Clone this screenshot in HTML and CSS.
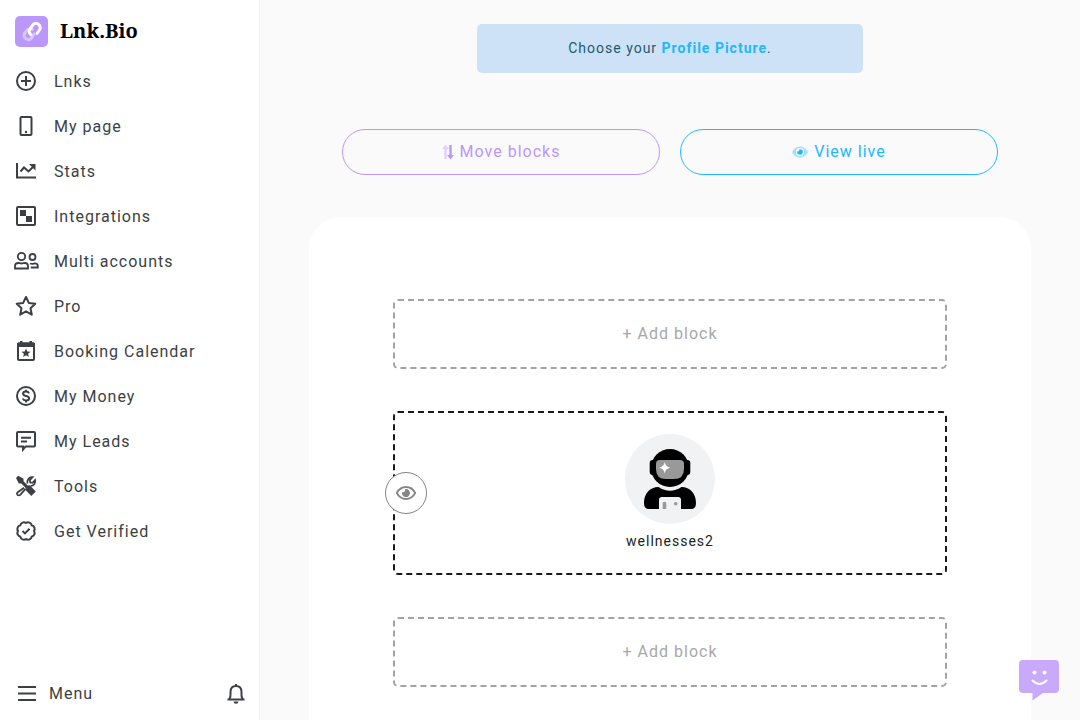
FILE: index.html
```html
<!DOCTYPE html>
<html lang="en">
<head>
  <meta charset="UTF-8">
  <meta name="viewport" content="width=device-width, initial-scale=1.0">
  <title>Lnk.Bio</title>
  <link rel="stylesheet" href="styles.css">
</head>
<body>

  <aside class="sidebar">
    <a class="brand" href="#">
      <span class="brand-mark">
        <svg width="24" height="24" viewBox="0 0 24 24" fill="none" stroke="#fff" stroke-width="3" stroke-linecap="round">
          <path opacity=".45" d="M14 14l-2.500 4a4.200 4.200 0 0 1-7-4.500l2.300-3.200a4.200 4.200 0 0 1 5.700-.8"/>
          <path d="M10.800 14.700a4.200 4.200 0 0 1-.8-5.700l2.500-3.700a4.200 4.200 0 0 1 7 4.700l-2.500 3.500"/>
        </svg>
      </span>
      <span class="brand-name">Lnk.Bio</span>
    </a>

    <nav class="nav">
      <a class="nav-link" href="#">
        <svg class="icon" viewBox="0 0 26 26"><circle cx="13" cy="13" r="9"/><path d="M13 8v10M8 13h10"/></svg>
        Lnks
      </a>
      <a class="nav-link" href="#">
        <svg class="icon" viewBox="0 0 26 26"><rect x="7.500" y="4" width="11" height="18" rx="1"/><circle class="solid" cx="13" cy="19" r="1.200"/></svg>
        My page
      </a>
      <a class="nav-link" href="#">
        <svg class="icon" viewBox="0 0 26 26"><path d="M4 5v14.500h19"/><path d="M7.500 13.500l3.500-4 4.500 4 5-5"/><path class="solid" d="M16 6h6.500v6.500z"/></svg>
        Stats
      </a>
      <a class="nav-link" href="#">
        <svg class="icon" viewBox="0 0 26 26"><rect x="4" y="4" width="18" height="18" rx="1"/><path class="solid" d="M7 7h6v6h6v6h-6v-6H7z"/></svg>
        Integrations
      </a>
      <a class="nav-link" href="#">
        <svg class="icon icon-thin" viewBox="0 0 26 26"><circle cx="8.500" cy="8.500" r="3.700"/><path d="M2 20.500v-2.500c0-2 1.500-3 3.300-3 1.200 0 1.700.5 3.200.5s2-.5 3.200-.5c1.800 0 3.300 1 3.300 3v2.500z"/><circle cx="19.500" cy="9" r="3"/><path d="M17 15.500c1 .3 1.500.3 2.500.3s1.300-.5 2.500-.5c1.600 0 2.800 1.200 2.800 2.700v1.500h-7"/></svg>
        Multi accounts
      </a>
      <a class="nav-link" href="#">
        <svg class="icon" viewBox="0 0 26 26"><path stroke-linejoin="round" d="M13 4l2.800 5.900 6.500.8-4.800 4.500 1.300 6.500-5.800-3.300-5.800 3.300 1.300-6.500-4.800-4.500 6.500-.8z"/></svg>
        Pro
      </a>
      <a class="nav-link" href="#">
        <svg class="icon" viewBox="0 0 26 26"><rect x="5" y="5.500" width="16" height="16.500" rx="1"/><path class="solid" d="M4 5.500l1-1h2V3h2.500v1.500h7V3H19v1.500h2l1 1V9H4z"/><path class="solid" d="M13 10.500l1.300 2.900 3.200.3-2.400 2.100.7 3.200-2.800-1.700-2.800 1.700.7-3.200-2.400-2.100 3.200-.3z"/></svg>
        Booking Calendar
      </a>
      <a class="nav-link" href="#">
        <svg class="icon" viewBox="0 0 26 26"><circle cx="13" cy="13" r="9"/><path d="M16 10.300c-.5-1.200-1.500-1.700-3-1.700-1.800 0-2.900.8-2.900 2.100 0 3 6 1.500 6 4.500 0 1.400-1.200 2.200-3.100 2.200-1.600 0-2.700-.6-3.200-1.900M13 6.700v2M13 17.400v2"/></svg>
        My Money
      </a>
      <a class="nav-link" href="#">
        <svg class="icon" viewBox="0 0 26 26"><path d="M5 4h16a1 1 0 0 1 1 1v12.500a1 1 0 0 1-1 1h-8.500L10 21.500v-3H5a1 1 0 0 1-1-1V5a1 1 0 0 1 1-1z"/><path d="M8 9.700h10M8 13.500h6"/></svg>
        My Leads
      </a>
      <a class="nav-link" href="#">
        <svg class="icon icon-thin" viewBox="0 0 26 26">
          <path d="M11 14.800l-6.500 4.600a1.900 1.900 0 0 0 0 2.500 1.900 1.900 0 0 0 2.700 0l5.300-6M14.500 10.500c-.9-3.200 1.500-6.800 5-6.300l-2.700 3 .5 2.200 2.200.4 2.600-2.700c.8 3-1.500 6-4.600 5.700"/>
          <path class="solid" d="M3 5l2.200-2.200 5.300 3v2.400l4.300 4.300 2-.2 6 6.200-4.500 4.500-5.800-6 .2-2-4.300-4.500H5.800z"/>
        </svg>
        Tools
      </a>
      <a class="nav-link" href="#">
        <svg class="icon" viewBox="0 0 26 26"><path d="M13 5a3.700 3.700 0 0 1 5.700 2.300A3.700 3.700 0 0 1 21 13a3.700 3.700 0 0 1-2.300 5.700A3.700 3.700 0 0 1 13 21a3.700 3.700 0 0 1-5.700-2.300A3.700 3.700 0 0 1 5 13a3.700 3.700 0 0 1 2.300-5.700A3.700 3.700 0 0 1 13 5z"/><path d="M9.500 13l2.500 2.400 4.500-4.600"/></svg>
        Get Verified
      </a>
    </nav>

    <div class="sidebar-footer">
      <button class="menu-btn" type="button">
        <svg class="icon" viewBox="0 0 26 26"><path d="M4 6h18M4 12.500h18M4 19h18"/></svg>
        Menu
      </button>
      <button class="bell-btn" type="button" aria-label="Notifications">
        <svg class="icon" viewBox="0 0 26 26"><path d="M4.500 18.500h17M6.500 18C8 16 7.500 13.500 7.500 11 7.500 7.500 9.500 5 13 5s5.500 2.500 5.500 6c0 2.500-.5 5 1 7M13 3v2"/><path class="solid" d="M10.500 20.500h5a2.500 2.200 0 0 1-5 0z"/></svg>
      </button>
    </div>
  </aside>

  <main class="main">
    <p class="alert">Choose your <a href="#">Profile Picture</a>.</p>

    <div class="actions">
      <button class="pill pill-move" type="button">
        <svg width="12" height="16" viewBox="0 0 12 16" fill="currentColor"><path opacity=".4" d="M3.500 1L7 5H4.700v10H2.300V5H0z"/><path d="M7.300 1h2.400v10H12l-3.500 4.500L5 11h2.300z"/></svg>
        Move blocks
      </button>
      <button class="pill pill-live" type="button">
        <svg width="16" height="12" viewBox="0 0 16 12" fill="currentColor"><path opacity=".4" d="M8 .5c3.800 0 6.500 2.500 8 5.500-1.500 3-4.200 5.500-8 5.500S1.500 9 0 6C1.500 3 4.200.5 8 .5z"/><circle cx="8" cy="6" r="4" fill="#fafafa"/><path d="M8 3.200a2.800 2.800 0 1 1-2.700 2.100c1.200.6 2.500-.5 1.900-2z"/></svg>
        View live
      </button>
    </div>

    <section class="card">
      <button class="block block-add" type="button">+ Add block</button>

      <div class="block block-profile">
        <button class="toggle" type="button" aria-label="Toggle visibility">
          <svg width="22" height="16" viewBox="0 0 22 16"><path d="M1.800 8C3.800 4.300 7 2 11 2s7.200 2.300 9.200 6c-2 3.700-5.200 6-9.200 6s-7.200-2.300-9.200-6z" fill="none" stroke="currentColor" stroke-width="1.800"/><path fill="currentColor" d="M11 4a4 4 0 1 1-3.900 3c1.600.9 3.600-.5 2.900-2.800z"/></svg>
        </button>
        <svg class="avatar" viewBox="0 0 90 90">
          <circle cx="45" cy="45" r="45" fill="#f1f2f4"/>
          <circle cx="45" cy="34" r="19"/>
          <rect x="24.700" y="26" width="40.600" height="15" rx="3"/>
          <path fill="#999" d="M35 26h20q4 0 4 4v5q0 10-10 10h-8q-10 0-10-10v-5q0-4 4-4z"/>
          <path fill="#fff" d="M39.700 28q.8 4.900 5.500 5.700-4.700.8-5.500 5.700-.8-4.900-5.500-5.700 4.700-.8 5.500-5.700z"/>
          <path d="M33.500 53Q45 60.500 56.500 53C65 53 71 59.500 71 69q0 6-5 6H24q-5 0-5-6c0-9.500 6-16 14.500-16z"/>
          <path fill="#f1f2f4" d="M34 75v-9q0-3 3-3h16q3 0 3 3v9z"/>
          <path fill="#999" d="M37.700 75v-5.500a1.800 1.800 0 0 1 3.600 0V75z"/>
          <circle cx="50.700" cy="69.700" r="1.800" fill="#999"/>
        </svg>
        <span class="username">wellnesses2</span>
      </div>

      <button class="block block-add" type="button">+ Add block</button>
    </section>
  </main>

  <button class="chat" type="button" aria-label="Chat">
    <svg width="40" height="40" viewBox="0 0 40 40"><path fill="#c9a9f9" d="M4 0h32q4 0 4 4v25q0 4-4 4H24L13.500 40.500V33H4q-4 0-4-4V4q0-4 4-4z"/><circle cx="15.500" cy="12.500" r="2" fill="#fff"/><circle cx="25.500" cy="12.500" r="2" fill="#fff"/><path d="M13.500 20.500q7 7 14 0" fill="none" stroke="#fff" stroke-width="2" stroke-linecap="round"/></svg>
  </button>

</body>
</html>
```

FILE: styles.css
```css
:root {
  --text: #3c3f43;
  --purple: #bb96fb;
  --blue: #21b8fb;
  --page: #fafafa;
}

* {
  box-sizing: border-box;
}

body {
  margin: 0;
  display: flex;
  height: 100vh;
  background: var(--page);
  color: var(--text);
  font-family: Roboto, sans-serif;
  font-size: 16px;
  line-height: 20px;
  letter-spacing: 1px;
}

a {
  color: inherit;
  text-decoration: none;
}

button {
  padding: 0;
  border: none;
  background: none;
  color: inherit;
  font: inherit;
  letter-spacing: inherit;
  cursor: pointer;
}

/* Sidebar */
.sidebar {
  display: flex;
  flex-direction: column;
  flex: 0 0 260px;
  background: #fff;
  border-right: 1px solid #f1f1f1;
}

.brand {
  display: flex;
  align-items: center;
  gap: 12px;
  padding: 16px 15px 12px;
}

.brand-mark {
  display: flex;
  align-items: center;
  justify-content: center;
  width: 33px;
  height: 31px;
  border-radius: 5px;
  background: var(--purple);
}

.brand-name {
  padding-bottom: 2px;
  color: #000;
  font-family: "Noto Serif", "Droid Serif", "Liberation Serif", serif;
  font-size: 20px;
  font-weight: 700;
  letter-spacing: 0;
}

.nav-link {
  display: flex;
  align-items: center;
  gap: 15px;
  height: 45px;
  padding: 0 13px;
}

.nav-link .icon {
  margin-bottom: 1px;
}

.icon {
  flex: none;
  width: 26px;
  height: 26px;
  fill: none;
  stroke: var(--text);
  stroke-width: 2;
}

.icon-thin {
  stroke-width: 1.8;
}

.icon .solid {
  fill: var(--text);
  stroke: none;
}

.sidebar-footer {
  display: flex;
  align-items: center;
  justify-content: space-between;
  margin-top: auto;
  padding: 0 10px 13px 14px;
}

.menu-btn {
  display: flex;
  align-items: center;
  gap: 9px;
}

.bell-btn {
  display: flex;
}

/* Main column */
.main {
  flex: 1;
  display: flex;
  flex-direction: column;
  align-items: center;
  padding-top: 24px;
  overflow-y: auto;
  scrollbar-width: none;
}

.alert {
  flex: none;
  width: 47%;
  margin: 0 0 56px;
  padding: 14px;
  border-radius: 5px;
  background: #cde2f6;
  color: #1d5a6c;
  font-size: 14px;
  line-height: 21px;
  text-align: center;
}

.alert a {
  color: var(--blue);
  font-weight: 700;
}

.actions {
  display: flex;
  flex: none;
  gap: 20px;
  width: 80%;
  margin-bottom: 42px;
}

.pill {
  display: flex;
  flex: 1;
  align-items: center;
  justify-content: center;
  gap: 6px;
  height: 46px;
  border: 1px solid;
  border-radius: 23px;
}

.pill-move {
  color: var(--purple);
}

.pill-live {
  color: var(--blue);
}

.card {
  display: flex;
  flex: none;
  flex-direction: column;
  gap: 42px;
  width: 88%;
  padding: 82px 84px;
  border-radius: 32px 32px 0 0;
  background: #fff;
}

.block {
  border: 2px dashed #a3a3a3;
  border-radius: 5px;
}

.block-add {
  height: 70px;
  color: #a8a8a8;
}

.block-profile {
  position: relative;
  display: flex;
  flex-direction: column;
  align-items: center;
  gap: 7px;
  padding: 21px 0 22px;
  border-color: #1a1a1a;
}

.avatar {
  width: 90px;
  height: 90px;
}

.username {
  color: #222;
  font-size: 14px;
}

/* Sits over the left edge of the profile block */
.toggle {
  position: absolute;
  top: 50%;
  left: -10px;
  display: flex;
  align-items: center;
  justify-content: center;
  width: 42px;
  height: 42px;
  margin-top: -21px;
  border: 1px solid #858585;
  border-radius: 50%;
  background: #fff;
  color: #858585;
}

.chat {
  position: fixed;
  right: 21px;
  bottom: 20px;
  display: flex;
}

.chat svg {
  overflow: visible;
}
```
